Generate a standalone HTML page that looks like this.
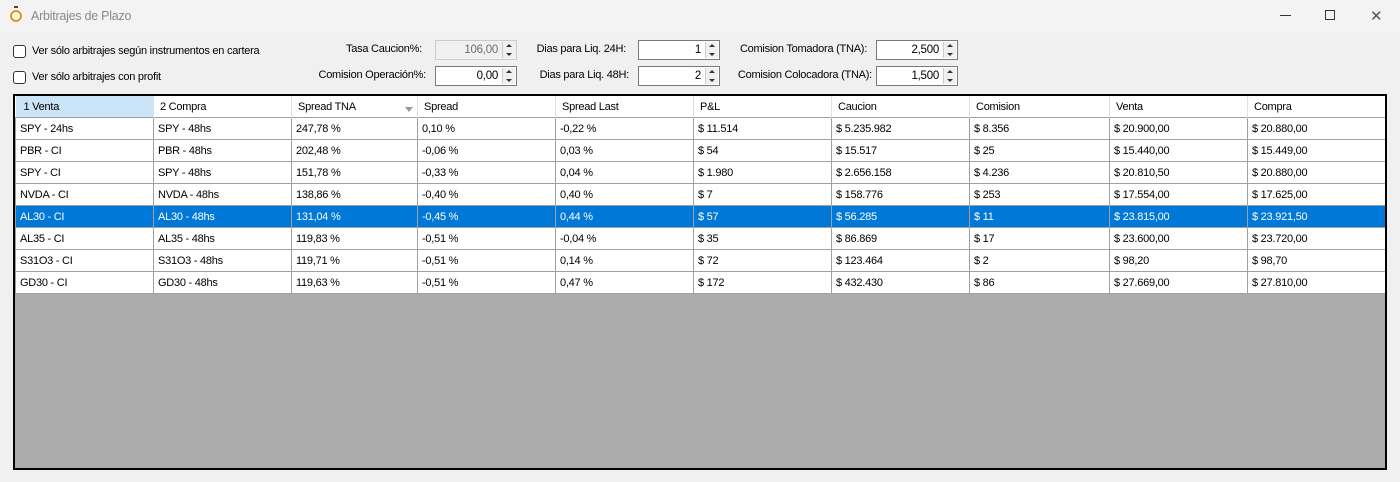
<!DOCTYPE html>
<html><head><meta charset="utf-8"><style>
*{margin:0;padding:0;box-sizing:border-box}
body{width:1400px;height:482px;background:#f0f0f0;font-family:"Liberation Sans",sans-serif;font-size:11px;letter-spacing:-0.25px;color:#000;position:relative;overflow:hidden}
.a{position:absolute;white-space:nowrap}
.title{left:0;top:0;width:1400px;height:32px;background:#f3f3f3}
.cb{width:13px;height:13px;border:1px solid #333;border-radius:3px;background:#fff}
.lbl{text-align:right}
.num{height:20px;border:1px solid #7a7a7a;background:#fff;text-align:right;padding:3px 18px 0 0;font-size:11.5px}
.num.dis{background:#f0f0f0;color:#6d6d6d;border-color:#ccc}
.spin{position:absolute;right:1px;top:1px;width:13px;height:16px;background:#f0f0f0;border-left:1px solid #ccc}
.spin:before,.spin:after{content:"";position:absolute;left:3px;border-left:3px solid transparent;border-right:3px solid transparent}
.spin:before{top:2px;border-bottom:3px solid #333}
.spin:after{bottom:2px;border-top:3px solid #333}
.grid{left:13px;top:94px;width:1374px;height:376px;border:2px solid #000;background:#ababab;overflow:hidden}
table{border-collapse:collapse;table-layout:fixed;background:#fff}
td{height:22px;border:1px solid #a0a0a0;padding:1px 0 0 4px;font-size:11px;overflow:hidden;white-space:nowrap}
tr.h td{height:21px;border:none;border-right:1px solid #e0e0e0;padding-left:6px;background:#fff}
tr.sel td{background:#0078d7;color:#fff}
</style></head><body>
<div class="a title"></div>
<div class="a" style="left:10px;top:10px;width:12px;height:12px;border:2px solid #d9a100;border-radius:50%"></div>
<div class="a" style="left:14px;top:6px;width:4px;height:2px;background:#444"></div>
<div class="a" style="left:31px;top:9px;color:#8a8a8a;font-size:12.5px">Arbitrajes de Plazo</div>
<div class="a" style="left:1280px;top:15px;width:11px;height:1px;background:#333"></div>
<div class="a" style="left:1325px;top:10px;width:10px;height:10px;border:1px solid #333"></div>
<div class="a" style="left:1370px;top:7px;font-size:15px;color:#555">✕</div>

<div class="a cb" style="left:13px;top:45px"></div>
<div class="a" style="left:32px;top:45px">Ver sólo arbitrajes según instrumentos en cartera</div>
<div class="a cb" style="left:13px;top:71px"></div>
<div class="a" style="left:32px;top:71px">Ver sólo arbitrajes con profit</div>

<div class="a lbl" style="left:300px;width:122px;top:43px">Tasa Caucion%:</div>
<div class="a num dis" style="left:435px;top:40px;width:82px">106,00<span class="spin"></span></div>
<div class="a lbl" style="left:300px;width:126px;top:69px">Comision Operación%:</div>
<div class="a num" style="left:435px;top:66px;width:82px">0,00<span class="spin"></span></div>

<div class="a lbl" style="left:520px;width:106px;top:43px">Dias para Liq. 24H:</div>
<div class="a num" style="left:638px;top:40px;width:82px">1<span class="spin"></span></div>
<div class="a lbl" style="left:520px;width:109px;top:69px">Dias para Liq. 48H:</div>
<div class="a num" style="left:638px;top:66px;width:82px">2<span class="spin"></span></div>

<div class="a lbl" style="left:720px;width:147px;top:43px">Comision Tomadora (TNA):</div>
<div class="a num" style="left:876px;top:40px;width:82px">2,500<span class="spin"></span></div>
<div class="a lbl" style="left:720px;width:152px;top:69px">Comision Colocadora (TNA):</div>
<div class="a num" style="left:876px;top:66px;width:82px">1,500<span class="spin"></span></div>

<div class="a grid">
<table style="width:1371px">
<colgroup><col style="width:138px"><col style="width:138px"><col style="width:126px"><col style="width:138px"><col style="width:138px"><col style="width:138px"><col style="width:138px"><col style="width:140px"><col style="width:138px"><col style="width:139px"></colgroup>
<tr class="h"><td style="background:#cce4f7;padding-left:8px">1 Venta</td><td>2 Compra</td><td>Spread TNA<span style="float:right;margin-right:4px;margin-top:6px;border-left:4px solid transparent;border-right:4px solid transparent;border-top:5px solid #999"></span></td><td>Spread</td><td>Spread Last</td><td>P&amp;L</td><td>Caucion</td><td>Comision</td><td>Venta</td><td>Compra</td></tr>
<tr><td>SPY - 24hs</td><td>SPY - 48hs</td><td>247,78 %</td><td>0,10 %</td><td>-0,22 %</td><td>$ 11.514</td><td>$ 5.235.982</td><td>$ 8.356</td><td>$ 20.900,00</td><td>$ 20.880,00</td></tr>
<tr><td>PBR - CI</td><td>PBR - 48hs</td><td>202,48 %</td><td>-0,06 %</td><td>0,03 %</td><td>$ 54</td><td>$ 15.517</td><td>$ 25</td><td>$ 15.440,00</td><td>$ 15.449,00</td></tr>
<tr><td>SPY - CI</td><td>SPY - 48hs</td><td>151,78 %</td><td>-0,33 %</td><td>0,04 %</td><td>$ 1.980</td><td>$ 2.656.158</td><td>$ 4.236</td><td>$ 20.810,50</td><td>$ 20.880,00</td></tr>
<tr><td>NVDA - CI</td><td>NVDA - 48hs</td><td>138,86 %</td><td>-0,40 %</td><td>0,40 %</td><td>$ 7</td><td>$ 158.776</td><td>$ 253</td><td>$ 17.554,00</td><td>$ 17.625,00</td></tr>
<tr class="sel"><td>AL30 - CI</td><td>AL30 - 48hs</td><td>131,04 %</td><td>-0,45 %</td><td>0,44 %</td><td>$ 57</td><td>$ 56.285</td><td>$ 11</td><td>$ 23.815,00</td><td>$ 23.921,50</td></tr>
<tr><td>AL35 - CI</td><td>AL35 - 48hs</td><td>119,83 %</td><td>-0,51 %</td><td>-0,04 %</td><td>$ 35</td><td>$ 86.869</td><td>$ 17</td><td>$ 23.600,00</td><td>$ 23.720,00</td></tr>
<tr><td>S31O3 - CI</td><td>S31O3 - 48hs</td><td>119,71 %</td><td>-0,51 %</td><td>0,14 %</td><td>$ 72</td><td>$ 123.464</td><td>$ 2</td><td>$ 98,20</td><td>$ 98,70</td></tr>
<tr><td>GD30 - CI</td><td>GD30 - 48hs</td><td>119,63 %</td><td>-0,51 %</td><td>0,47 %</td><td>$ 172</td><td>$ 432.430</td><td>$ 86</td><td>$ 27.669,00</td><td>$ 27.810,00</td></tr>
</table>
</div>
</body></html>
